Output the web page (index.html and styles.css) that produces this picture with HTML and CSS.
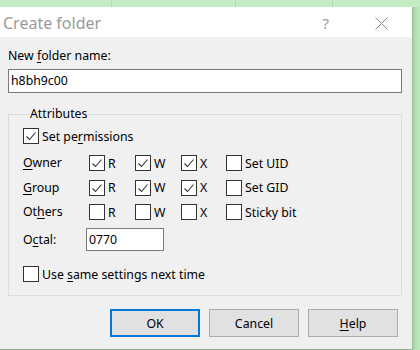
FILE: index.html
```html
<!DOCTYPE html>
<html lang="en">
<head>
    <meta charset="UTF-8">
    <title>Create folder</title>
    <link rel="stylesheet" href="styles.css">
</head>
<body>

    <div class="backdrop">
        <div class="cell c1"></div>
        <div class="cell c2"></div>
        <div class="cell c3"></div>
        <div class="cell c4"></div>
    </div>

    <div class="screen">
        <div class="dialog">
            <div class="titlebar">
                <span class="title">Create folder</span>
                <span class="help-btn">?</span>
                <span class="close-btn">
                    <svg width="13" height="13" viewBox="0 0 13 13">
                        <path d="M0.5 0.5 L12.5 12.5 M12.5 0.5 L0.5 12.5" stroke="#8a8a8a" stroke-width="1" fill="none"/>
                    </svg>
                </span>
            </div>

            <div class="content">
                <div class="field-label">New <u>f</u>older name:</div>
                <div class="textbox name-box">h8bh9c00</div>

                <fieldset class="group">
                    <legend>Attributes</legend>

                    <div class="check-row">
                        <span class="box checked"></span>
                        <span>Set pe<u>r</u>missions</span>
                    </div>

                    <div class="perm-grid">
                        <span class="row-label"><u>O</u>wner</span>
                        <span class="perm"><span class="box checked"></span>R</span>
                        <span class="perm"><span class="box checked"></span>W</span>
                        <span class="perm"><span class="box checked"></span>X</span>
                        <span class="perm"><span class="box"></span>Set UID</span>

                        <span class="row-label"><u>G</u>roup</span>
                        <span class="perm"><span class="box checked"></span>R</span>
                        <span class="perm"><span class="box checked"></span>W</span>
                        <span class="perm"><span class="box checked"></span>X</span>
                        <span class="perm"><span class="box"></span>Set GID</span>

                        <span class="row-label">Ot<u>h</u>ers</span>
                        <span class="perm"><span class="box"></span>R</span>
                        <span class="perm"><span class="box"></span>W</span>
                        <span class="perm"><span class="box"></span>X</span>
                        <span class="perm"><span class="box"></span>Sticky bit</span>
                    </div>

                    <div class="octal-row">
                        <span class="row-label">O<u>c</u>tal:</span>
                        <div class="textbox octal-box">0770</div>
                    </div>

                    <div class="check-row last">
                        <span class="box"></span>
                        <span>Use <u>s</u>ame settings next time</span>
                    </div>
                </fieldset>

                <div class="buttons">
                    <button class="default">OK</button>
                    <button>Cancel</button>
                    <button><u>H</u>elp</button>
                </div>
            </div>
        </div>
        <div class="shadow"></div>
    </div>

</body>
</html>
```

FILE: styles.css
```css
body {
    margin: 0;
    width: 420px;
    height: 350px;
    overflow: hidden;
    background-color: #bde8bd;
    font-family: "Noto Sans", "Open Sans", Arial, sans-serif;
    font-size: 12.3px;
    color: #000;
}

u {
    text-decoration-thickness: 1px;
    text-underline-offset: 2px;
}

/* green window behind the dialog */
.backdrop {
    display: flex;
    height: 7px;
    background-color: #c4ecc4;
}

.cell {
    border-right: 1px solid #aed9ae;
}

.c1 { width: 111px; }
.c2 { width: 123px; }
.c3 { width: 96px; }
.c4 { flex: 1; border-right: none; }

.screen {
    display: flex;
    height: 343px;
}

.shadow {
    flex: 1;
    background: linear-gradient(90deg, #9fd39f, #b3e2b3 40%, #bde8bd);
}

/* dialog */
.dialog {
    width: 412px;
    height: 342px;
    border-right: 1px solid #9fbf9f;
    border-bottom: 1px solid #8fae8f;
    display: flex;
    flex-direction: column;
    background-color: #f0f0f0;
}

.titlebar {
    height: 30px;
    background-color: #fff;
    display: flex;
    align-items: center;
}

.title {
    padding-left: 3px;
    font-size: 16px;
    color: #9a9a9a;
    flex: 1;
    margin-top: 2px;
}

.help-btn {
    font-size: 15px;
    color: #9a9a9a;
    margin-right: 46px;
    margin-top: 2px;
}

.close-btn {
    width: 13px;
    height: 13px;
    margin-right: 24px;
    margin-top: 2px;
}

.content {
    padding: 11px 10px 0 8px;
}

.field-label {
    line-height: 16px;
    margin-bottom: 5px;
}

.textbox {
    background-color: #fff;
    border: 1px solid #7a7a7a;
    height: 22px;
    line-height: 22px;
    padding-left: 2px;
    box-sizing: content-box;
}

/* attributes group */
.group {
    margin: 13px 0 0 0;
    padding: 6px 12px 13px 14px;
    border: 1px solid #dcdcdc;
}

.group legend {
    padding: 0 1px;
    margin-left: 6px;
    line-height: 16px;
}

.check-row {
    display: flex;
    align-items: center;
    gap: 3px;
    height: 16px;
}

.check-row.last {
    margin-top: 15px;
}

.box {
    width: 14px;
    height: 14px;
    border: 1px solid #333;
    background-color: #fff;
    flex: none;
}

.box.checked {
    background: #fff url("data:image/svg+xml;utf8,<svg xmlns='http://www.w3.org/2000/svg' width='14' height='14'><path d='M2.5 7.5 L5.5 10.5 L11.5 3.5' stroke='%23333' stroke-width='1.1' fill='none'/></svg>") no-repeat;
}

.perm-grid {
    display: grid;
    grid-template-columns: 66px 46px 46px 45px auto;
    grid-auto-rows: 16px;
    row-gap: 8.5px;
    align-items: center;
    margin-top: 11px;
}

.row-label {
    line-height: 16px;
}

.perm {
    display: flex;
    align-items: center;
    gap: 3px;
}

.octal-row {
    display: flex;
    align-items: center;
    margin-top: 8px;
}

.octal-row .row-label {
    width: 63px;
}

.octal-box {
    width: 74px;
    height: 21px;
    line-height: 21px;
}

/* buttons */
.buttons {
    display: flex;
    justify-content: flex-end;
    gap: 9px;
    margin-top: 13px;
    padding-right: 4px;
}

button {
    width: 90px;
    height: 28px;
    border: 1px solid #adadad;
    background-color: #e1e1e1;
    font-family: inherit;
    font-size: 12.3px;
    color: #000;
    padding: 0;
}

button.default {
    border: 2px solid #0078d7;
}
```
